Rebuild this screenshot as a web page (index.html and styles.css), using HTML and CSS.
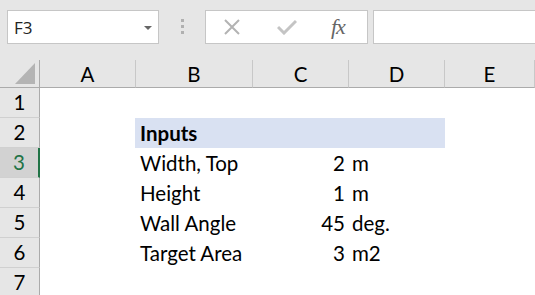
FILE: index.html
```html
<!DOCTYPE html>
<html lang="en">
  <head>
    <meta charset="UTF-8" />
    <meta name="viewport" content="width=device-width, initial-scale=1.0" />
    <title>Inputs sheet</title>
    <link rel="stylesheet" href="styles.css">
  </head>
  <body>
    <div class="formula-bar">
      <div class="name-box">
        <span>F3</span>
        <span class="caret"></span>
      </div>
      <div class="grip"><i></i><i></i><i></i></div>
      <div class="fx-tools">
        <svg class="tool-icon" width="18" height="16" viewBox="0 0 18 16">
          <path d="M2 1 L16 15 M16 1 L2 15" stroke="#b3b3b3" stroke-width="2" fill="none" />
        </svg>
        <svg class="tool-icon" width="20" height="16" viewBox="0 0 20 16">
          <path d="M1 8 L7 14 L19 2" stroke="#c4c4c4" stroke-width="3" fill="none" />
        </svg>
        <span class="fx">fx</span>
      </div>
      <div class="formula-input"></div>
    </div>

    <div class="sheet">
      <div class="corner">
        <svg width="39" height="27" viewBox="0 0 39 27">
          <polygon points="35,3 35,24 15,24" fill="#b4b4b4" />
        </svg>
      </div>
      <div class="col-head">A</div>
      <div class="col-head">B</div>
      <div class="col-head">C</div>
      <div class="col-head">D</div>
      <div class="col-head">E</div>

      <div class="row-head">1</div>
      <div class="cell"></div><div class="cell"></div><div class="cell"></div><div class="cell"></div><div class="cell"></div>

      <div class="row-head">2</div>
      <div class="cell"></div>
      <div class="cell fill fill-start bold">Inputs</div>
      <div class="cell fill"></div>
      <div class="cell fill"></div>
      <div class="cell"></div>

      <div class="row-head active">3</div>
      <div class="cell"></div>
      <div class="cell">Width, Top</div>
      <div class="cell num">2</div>
      <div class="cell unit">m</div>
      <div class="cell"></div>

      <div class="row-head">4</div>
      <div class="cell"></div>
      <div class="cell">Height</div>
      <div class="cell num">1</div>
      <div class="cell unit">m</div>
      <div class="cell"></div>

      <div class="row-head">5</div>
      <div class="cell"></div>
      <div class="cell">Wall Angle</div>
      <div class="cell num">45</div>
      <div class="cell unit">deg.</div>
      <div class="cell"></div>

      <div class="row-head">6</div>
      <div class="cell"></div>
      <div class="cell">Target Area</div>
      <div class="cell num">3</div>
      <div class="cell unit">m2</div>
      <div class="cell"></div>

      <div class="row-head">7</div>
      <div class="cell"></div><div class="cell"></div><div class="cell"></div><div class="cell"></div><div class="cell"></div>
    </div>
  </body>
</html>
```

FILE: styles.css
```css
*,
*::before,
*::after {
  box-sizing: border-box;
}

html,
body {
  margin: 0;
  height: 100%;
  overflow: hidden;
}

body {
  background-color: #e6e6e6;
  font-family: Lato, "Liberation Sans", sans-serif;
  color: #000;
}

/* top strip: name box + formula tools */

.formula-bar {
  display: flex;
  align-items: flex-start;
  height: 60px;
  padding: 10px 0 0 7px;
}

.name-box {
  display: flex;
  align-items: center;
  justify-content: space-between;
  width: 152px;
  height: 34px;
  padding: 0 6px 0 6px;
  background: #fff;
  border: 1px solid #c6c6c6;
  font-family: "Open Sans", "Noto Sans", sans-serif;
  font-size: 17px;
  color: #222;
}

.caret {
  width: 0;
  height: 0;
  border-left: 4px solid transparent;
  border-right: 4px solid transparent;
  border-top: 4px solid #666;
  margin-top: 1px;
}

.grip {
  display: flex;
  flex-direction: column;
  align-items: center;
  gap: 3px;
  width: 46px;
  padding-top: 9px;
}

.grip i {
  display: block;
  width: 3px;
  height: 3px;
  background: #b0b0b0;
}

.fx-tools {
  display: flex;
  align-items: center;
  width: 163px;
  height: 34px;
  padding-left: 17px;
  background: #fff;
  border: 1px solid #c6c6c6;
}

.tool-icon {
  display: block;
}

.tool-icon + .tool-icon {
  margin-left: 36px;
}

.fx {
  margin-left: 34px;
  font-family: "Liberation Serif", serif;
  font-style: italic;
  font-size: 22px;
  color: #666;
  letter-spacing: -1px;
}

.formula-input {
  flex: 1;
  height: 34px;
  margin-left: 5px;
  background: #fff;
  border: 1px solid #c6c6c6;
  border-right: none;
}

/* grid */

.sheet {
  display: grid;
  grid-template-columns: 40px 96px 117px 96px 96px 1fr;
  grid-template-rows: 28px repeat(7, 30px);
  background: #fff;
  font-size: 20.5px;
}

.corner,
.col-head {
  background: #e6e6e6;
  border-bottom: 1px solid #ababab;
}

.corner {
  border-right: 1px solid #ababab;
}

.corner svg {
  display: block;
}

.col-head {
  border-right: 1px solid #c8c8c8;
  text-align: center;
  line-height: 27px;
  padding-top: 1px;
}

.row-head {
  background: #e6e6e6;
  border-right: 1px solid #ababab;
  border-bottom: 1px solid #d0d0d0;
  text-align: center;
  line-height: 29px;
}

.row-head.active {
  background: #d2d2d2;
  color: #217346;
  border-right: 2px solid #217346;
}

.cell {
  line-height: 30px;
  padding: 0 4px;
  white-space: nowrap;
}

.fill {
  background: #d9e1f2;
}

.fill-start {
  margin-left: -1px;
  padding-left: 5px;
}

.bold {
  font-weight: bold;
}

.num {
  text-align: right;
}

.unit {
  padding-left: 3px;
}
```
